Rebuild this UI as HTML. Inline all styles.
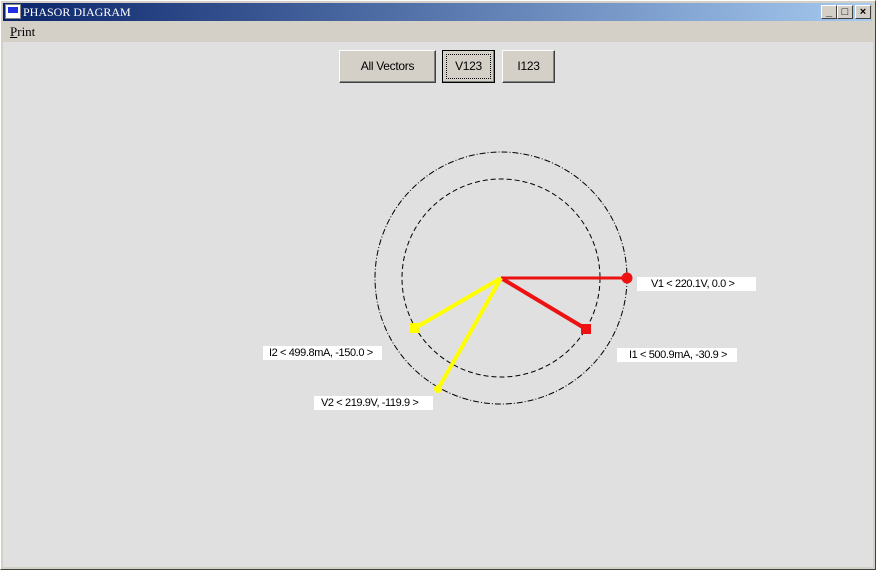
<!DOCTYPE html>
<html><head><meta charset="utf-8"><style>
*{margin:0;padding:0;box-sizing:border-box}
body{width:876px;height:570px;overflow:hidden;background:#d4d0c8;position:relative;font-family:"Liberation Sans",sans-serif}
.win{position:absolute;left:0;top:0;width:876px;height:570px;border:1px solid #fff;border-right-color:#404040;border-bottom-color:#404040;}
.title{position:absolute;left:3px;top:3px;width:869px;height:18px;background:linear-gradient(90deg,#0a246a,#a6caf0);}
.title span{position:absolute;left:20px;top:2px;color:#fff;font-family:"Liberation Serif",serif;font-size:12px;}
.ico{position:absolute;left:2px;top:1px;width:16px;height:15px;background:#fff;border:1px solid #888}
.ico i{position:absolute;left:2px;top:2px;width:10px;height:6px;background:#2030e0}
.tb{position:absolute;top:2px;width:16px;height:14px;background:#d4d0c8;border:1px solid;border-color:#fff #404040 #404040 #fff;font-size:11px;line-height:12px;text-align:center;font-weight:bold;color:#000}
.menu{position:absolute;left:10px;top:24px;font-family:"Liberation Serif",serif;font-size:13px}
.client{position:absolute;left:3px;top:42px;width:870px;height:525px;background:#e0e0e0;}
.btn{position:absolute;top:50px;height:33px;background:#d4d0c8;border:1px solid;border-color:#fff #404040 #404040 #fff;box-shadow:inset -1px -1px 0 #808080;font-size:12px;text-align:center;line-height:31px;letter-spacing:-0.3px}
.lbl{position:absolute;background:#fff;font-size:11px;letter-spacing:-0.4px;height:14px;line-height:14px;padding-left:14px;white-space:nowrap;overflow:hidden}
</style></head><body>
<div class="win"></div>
<div class="title"><div class="ico"><i></i></div><span>PHASOR DIAGRAM</span>
<div class="tb" style="left:818px">_</div><div class="tb" style="left:834px">□</div><div class="tb" style="left:852px">×</div></div>
<div class="menu"><u>P</u>rint</div>
<div class="client"></div>
<div class="btn" style="left:339px;width:97px">All Vectors</div>
<div class="btn" style="left:442px;width:53px;border:1px solid #000;outline:1px dotted #000;outline-offset:-5px">V123</div>
<div class="btn" style="left:502px;width:53px">I123</div>
<svg style="position:absolute;left:0;top:0" width="876" height="570">
<circle cx="501" cy="278" r="126" fill="none" stroke="#000" stroke-width="1" stroke-dasharray="6,2,1,2"/>
<circle cx="501" cy="278" r="99" fill="none" stroke="#000" stroke-width="1" stroke-dasharray="5,3"/>
<line x1="501" y1="278" x2="627" y2="278" stroke="#ee1111" stroke-width="3"/>
<circle cx="627" cy="278" r="5.5" fill="#ee1111"/>
<line x1="501" y1="278" x2="586" y2="329" stroke="#ee1111" stroke-width="4"/>
<rect x="581" y="324" width="10" height="10" fill="#ee1111"/>
<line x1="501" y1="278" x2="415" y2="328" stroke="#ffff00" stroke-width="4"/>
<rect x="410" y="323" width="10" height="10" fill="#ffff00"/>
<line x1="501" y1="278" x2="438" y2="389" stroke="#ffff00" stroke-width="4"/>
<circle cx="438" cy="389" r="4" fill="#ffff00"/>
</svg>
<div class="lbl" style="left:637px;top:277px;width:119px">V1 &lt; 220.1V, 0.0 &gt;</div>
<div class="lbl" style="left:617px;top:348px;width:120px;padding-left:12px">I1 &lt; 500.9mA, -30.9 &gt;</div>
<div class="lbl" style="left:263px;top:346px;width:119px;padding-left:6px">I2 &lt; 499.8mA, -150.0 &gt;</div>
<div class="lbl" style="left:314px;top:396px;width:119px;padding-left:7px">V2 &lt; 219.9V, -119.9 &gt;</div>
</body></html>
